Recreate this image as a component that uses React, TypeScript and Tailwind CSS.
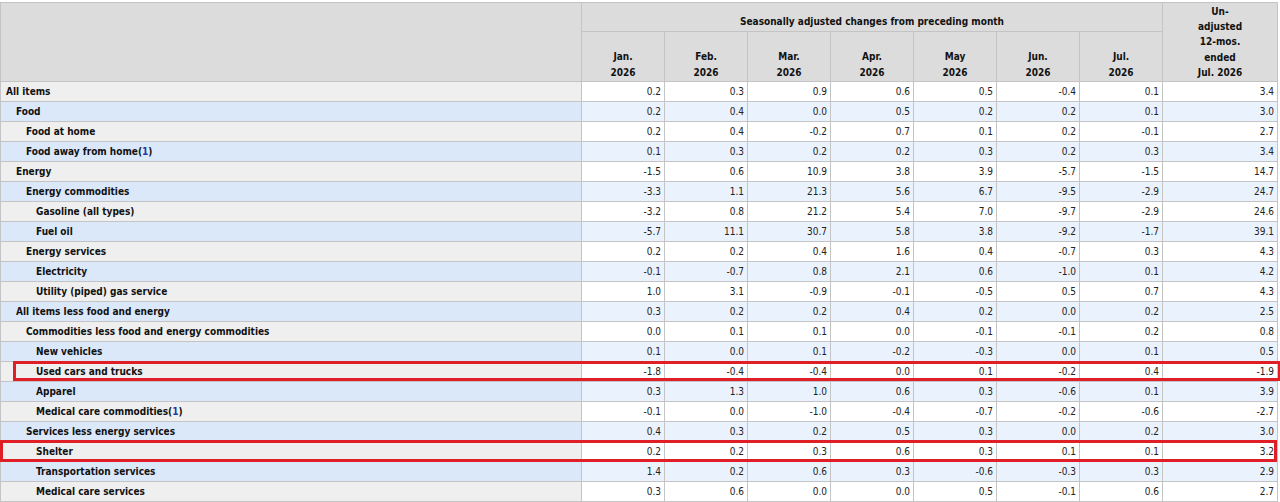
const months = ["Jan.", "Feb.", "Mar.", "Apr.", "May", "Jun.", "Jul."]

type Row = { label: string; level: number; note?: boolean; values: string[] }

const rows: Row[] = [
  { label: "All items", level: 0, values: ["0.2", "0.3", "0.9", "0.6", "0.5", "-0.4", "0.1", "3.4"] },
  { label: "Food", level: 1, values: ["0.2", "0.4", "0.0", "0.5", "0.2", "0.2", "0.1", "3.0"] },
  { label: "Food at home", level: 2, values: ["0.2", "0.4", "-0.2", "0.7", "0.1", "0.2", "-0.1", "2.7"] },
  { label: "Food away from home", level: 2, note: true, values: ["0.1", "0.3", "0.2", "0.2", "0.3", "0.2", "0.3", "3.4"] },
  { label: "Energy", level: 1, values: ["-1.5", "0.6", "10.9", "3.8", "3.9", "-5.7", "-1.5", "14.7"] },
  { label: "Energy commodities", level: 2, values: ["-3.3", "1.1", "21.3", "5.6", "6.7", "-9.5", "-2.9", "24.7"] },
  { label: "Gasoline (all types)", level: 3, values: ["-3.2", "0.8", "21.2", "5.4", "7.0", "-9.7", "-2.9", "24.6"] },
  { label: "Fuel oil", level: 3, values: ["-5.7", "11.1", "30.7", "5.8", "3.8", "-9.2", "-1.7", "39.1"] },
  { label: "Energy services", level: 2, values: ["0.2", "0.2", "0.4", "1.6", "0.4", "-0.7", "0.3", "4.3"] },
  { label: "Electricity", level: 3, values: ["-0.1", "-0.7", "0.8", "2.1", "0.6", "-1.0", "0.1", "4.2"] },
  { label: "Utility (piped) gas service", level: 3, values: ["1.0", "3.1", "-0.9", "-0.1", "-0.5", "0.5", "0.7", "4.3"] },
  { label: "All items less food and energy", level: 1, values: ["0.3", "0.2", "0.2", "0.4", "0.2", "0.0", "0.2", "2.5"] },
  { label: "Commodities less food and energy commodities", level: 2, values: ["0.0", "0.1", "0.1", "0.0", "-0.1", "-0.1", "0.2", "0.8"] },
  { label: "New vehicles", level: 3, values: ["0.1", "0.0", "0.1", "-0.2", "-0.3", "0.0", "0.1", "0.5"] },
  { label: "Used cars and trucks", level: 3, values: ["-1.8", "-0.4", "-0.4", "0.0", "0.1", "-0.2", "0.4", "-1.9"] },
  { label: "Apparel", level: 3, values: ["0.3", "1.3", "1.0", "0.6", "0.3", "-0.6", "0.1", "3.9"] },
  { label: "Medical care commodities", level: 3, note: true, values: ["-0.1", "0.0", "-1.0", "-0.4", "-0.7", "-0.2", "-0.6", "-2.7"] },
  { label: "Services less energy services", level: 2, values: ["0.4", "0.3", "0.2", "0.5", "0.3", "0.0", "0.2", "3.0"] },
  { label: "Shelter", level: 3, values: ["0.2", "0.2", "0.3", "0.6", "0.3", "0.1", "0.1", "3.2"] },
  { label: "Transportation services", level: 3, values: ["1.4", "0.2", "0.6", "0.3", "-0.6", "-0.3", "0.3", "2.9"] },
  { label: "Medical care services", level: 3, values: ["0.3", "0.6", "0.0", "0.0", "0.5", "-0.1", "0.6", "2.7"] },
]

const indent = ["pl-[5px]", "pl-[15px]", "pl-[25px]", "pl-[35px]"]

export default function App() {
  return (
    <div className="relative w-[1280px] h-[502px] overflow-hidden bg-white pt-[2px] font-['DejaVu_Sans_Condensed','DejaVu_Sans',sans-serif] text-[10px] text-[#222]">
      <table className="w-[1277px] table-fixed border-collapse">
        <colgroup>
          <col className="w-[581px]" />
          {months.map((m) => (
            <col key={m} className="w-[83px]" />
          ))}
          <col className="w-[115px]" />
        </colgroup>
        <thead>
          <tr className="h-[29px]">
            <th rowSpan={2} className="border border-[#c4c4c4] bg-[#dcdcdc]" />
            <th
              colSpan={7}
              className="border border-[#c4c4c4] bg-[#dcdcdc] pb-[2px] text-center align-bottom font-bold leading-[15px] text-[#111]"
            >
              Seasonally adjusted changes from preceding month
            </th>
            <th
              rowSpan={2}
              className="border border-[#c4c4c4] bg-[#dcdcdc] pb-[1px] text-center align-bottom font-bold leading-[15.25px] text-[#111]"
            >
              Un-
              <br />
              adjusted
              <br />
              12-mos.
              <br />
              ended
              <br />
              Jul. 2026
            </th>
          </tr>
          <tr className="h-[50px]">
            {months.map((m) => (
              <th
                key={m}
                className="border border-[#c4c4c4] bg-[#dcdcdc] pb-[1px] text-center align-bottom font-bold leading-[15.5px] text-[#111]"
              >
                {m}
                <br />
                2026
              </th>
            ))}
          </tr>
        </thead>
        <tbody>
          {rows.map((r, i) => {
            const blue = i % 2 === 1
            return (
              <tr key={r.label} className="h-[20px]">
                <th
                  className={`border border-[#c4c4c4] text-left font-bold text-[#111] ${indent[r.level]} ${
                    blue ? "bg-[#dbe8fa]" : "bg-[#efefef]"
                  }`}
                >
                  {r.label}
                  {r.note && (
                    <span>
                      (<span className="text-[#1a3cb0]">1</span>)
                    </span>
                  )}
                </th>
                {r.values.map((v, j) => (
                  <td
                    key={j}
                    className={`border border-[#c4c4c4] pr-[3px] text-right ${blue ? "bg-[#eaf2fd]" : "bg-white"}`}
                  >
                    {v}
                  </td>
                ))}
              </tr>
            )
          })}
        </tbody>
      </table>

      {/* highlight boxes drawn over the table */}
      <div className="pointer-events-none absolute left-[13px] top-[361px] h-[20px] w-[1268px] border-[3px] border-[#e01e25]" />
      <div className="pointer-events-none absolute left-0 top-[440px] h-[22px] w-[1277px] border-[3px] border-[#e01e25]" />
    </div>
  )
}
